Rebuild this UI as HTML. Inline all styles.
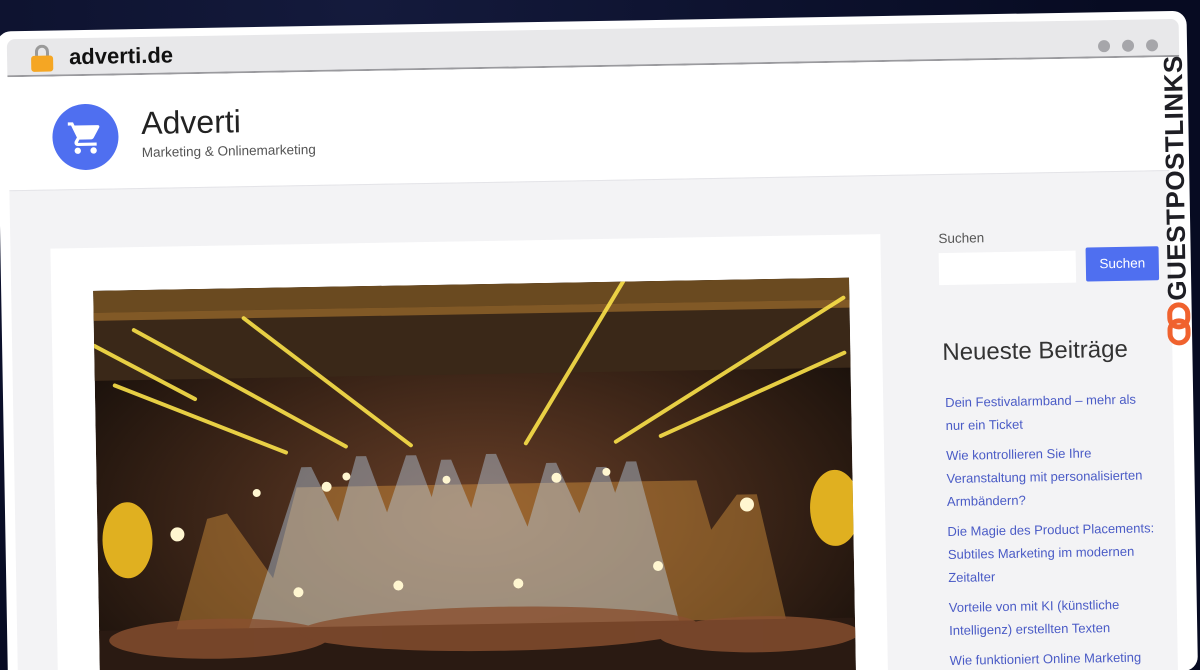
<!DOCTYPE html>
<html><head><meta charset="utf-8"><style>
*{margin:0;padding:0;box-sizing:border-box}
html,body{width:1200px;height:670px;overflow:hidden}
body{background:#0a0f2a;font-family:"Liberation Sans","DejaVu Sans",sans-serif;position:relative}
.clip{position:absolute;left:0;top:0;width:1200px;height:670px;overflow:hidden}
.stars{position:absolute;inset:0;background:radial-gradient(circle at 30% 0%,#141a3c,#070b22 70%)}
.rot{position:absolute;left:0;top:0;width:1200px;height:670px;transform:rotate(-1deg);transform-origin:600px 335px}
.win{position:absolute;left:2px;top:21px;width:1190px;height:660px;background:#fff;border-radius:14px;overflow:hidden}
.bar{position:absolute;left:10px;top:8px;width:1172px;height:38px;background:#e8e8ea;border-radius:8px 8px 0 0;border-bottom:2px solid #9a9a9e}
.hdr{position:absolute;left:10px;top:46px;width:1160px;height:113px;background:#fff}
.main{position:absolute;left:10px;top:159px;width:1160px;height:501px;background:#f3f3f5;border-top:1px solid #e4e4e8;overflow:hidden}
.dot{position:absolute;top:20px;width:12px;height:12px;border-radius:50%;background:#a6a6aa}
a{color:#4a5bc6;text-decoration:none}
</style></head><body>
<div class="clip">
<div class="stars"></div>
<div class="rot">
<div class="win">
 <div class="bar">
  <div style="position:absolute;left:28px;top:6px;width:14px;height:14px;border:3px solid #9a9a9a;border-bottom:none;border-radius:7px 7px 0 0"></div>
  <div style="position:absolute;left:24px;top:17px;width:22px;height:16px;background:#f5a623;border-radius:3px"></div>
  <div style="position:absolute;left:62px;top:6px;font-size:22px;font-weight:bold;color:#111">adverti.de</div>
  <div class="dot" style="left:1091px"></div><div class="dot" style="left:1115px"></div><div class="dot" style="left:1139px"></div>
 </div>
 <div class="hdr">
  <div style="position:absolute;left:44px;top:28px;width:66px;height:66px;border-radius:50%;background:#4f6ff0"></div>
  <svg style="position:absolute;left:58px;top:43px" width="38" height="38" viewBox="0 0 24 24"><path fill="#fff" d="M7 18c-1.1 0-2 .9-2 2s.9 2 2 2 2-.9 2-2-.9-2-2-2zM1 2v2h2l3.6 7.6-1.4 2.4c-.1.3-.2.6-.2 1 0 1.1.9 2 2 2h12v-2H7.4c-.1 0-.2-.1-.2-.2v-.1l.9-1.7h7.4c.8 0 1.4-.4 1.7-1l3.6-6.5c.1-.2.1-.3.1-.5 0-.6-.4-1-1-1H5.2l-.9-2H1zm16 16c-1.1 0-2 .9-2 2s.9 2 2 2 2-.9 2-2-.9-2-2-2z"/></svg>
  <div style="position:absolute;left:133px;top:30px;font-size:32px;color:#222">Adverti</div>
  <div style="position:absolute;left:133px;top:70px;font-size:13.5px;color:#555">Marketing &amp; Onlinemarketing</div>
 </div>
 <div class="main">
  <div style="position:absolute;left:40px;top:58px;width:830px;height:520px;background:#fff"></div>
  <svg style="position:absolute;left:82px;top:101px" width="756" height="420" viewBox="0 0 756 420">
   <defs>
    <radialGradient id="g1" cx="50%" cy="55%" r="60%"><stop offset="0" stop-color="#6a4028"/><stop offset="1" stop-color="#1c120c"/></radialGradient>
   </defs>
   <rect width="756" height="420" fill="url(#g1)"/>
   <rect width="756" height="90" fill="#3a2818"/>
   <rect y="0" width="756" height="22" fill="#6a4a20"/>
   <rect y="22" width="756" height="8" fill="#b07a30" opacity=".6"/>
   <g fill="#e8a040" opacity=".4">
    <polygon points="110,230 130,225 250,400 60,400"/><polygon points="640,215 660,215 700,400 500,400"/>
    <polygon points="200,200 600,200 650,380 150,380"/>
   </g>
   <g fill="#c0dcf6" opacity=".4">
    <polygon points="205,180 215,180 290,340 150,340"/><polygon points="260,170 270,170 330,340 210,340"/>
    <polygon points="310,170 320,170 380,340 250,340"/><polygon points="345,175 355,175 420,340 300,340"/>
    <polygon points="390,170 400,170 470,340 340,340"/><polygon points="450,180 460,180 530,340 400,340"/>
    <polygon points="500,185 510,185 560,340 440,340"/><polygon points="530,180 540,180 580,340 470,340"/>
   </g>
   <g stroke="#fbe24a" stroke-width="4" opacity=".9" stroke-linecap="round">
    <line x1="0" y1="55" x2="100" y2="110"/><line x1="20" y1="95" x2="190" y2="165"/>
    <line x1="40" y1="40" x2="250" y2="160"/><line x1="150" y1="30" x2="315" y2="160"/>
    <line x1="530" y1="0" x2="430" y2="160"/><line x1="750" y1="20" x2="520" y2="160"/>
    <line x1="750" y1="75" x2="565" y2="155"/>
   </g>
   <g fill="#fff6d0"><circle cx="80" cy="245" r="7"/><circle cx="650" cy="225" r="7"/><circle cx="230" cy="200" r="5"/><circle cx="460" cy="195" r="5"/><circle cx="560" cy="285" r="5"/><circle cx="200" cy="305" r="5"/><circle cx="300" cy="300" r="5"/><circle cx="420" cy="300" r="5"/><circle cx="160" cy="205" r="4"/><circle cx="250" cy="190" r="4"/><circle cx="350" cy="195" r="4"/><circle cx="510" cy="190" r="4"/></g>
   <ellipse cx="30" cy="250" rx="25" ry="38" fill="#e0b020"/><ellipse cx="738" cy="230" rx="25" ry="38" fill="#e0b020"/>
   <rect y="340" width="756" height="80" fill="#2a1a12"/>
   <g fill="#8a5030" opacity=".8"><ellipse cx="120" cy="350" rx="110" ry="20"/><ellipse cx="400" cy="345" rx="200" ry="22"/><ellipse cx="660" cy="355" rx="100" ry="18"/></g>
  </svg>
  <div style="position:absolute;left:928px;top:56px;font-size:13.5px;color:#555">Suchen</div>
  <div style="position:absolute;left:928px;top:78px;width:137px;height:32px;background:#fff"></div>
  <div style="position:absolute;left:1075px;top:75px;width:73px;height:34px;background:#4f6ff0;border-radius:2px;color:#fff;font-size:13.5px;text-align:center;line-height:34px">Suchen</div>
  <div style="position:absolute;left:930px;top:164px;font-size:24px;color:#333">Neueste Beiträge</div>
  <div style="position:absolute;left:932px;top:216px;width:226px;font-size:13px;line-height:23px">
   <div style="margin-bottom:7px;width:205px"><a>Dein Festivalarmband – mehr als nur ein Ticket</a></div>
   <div style="margin-bottom:7px"><a>Wie kontrollieren Sie Ihre Veranstaltung mit personalisierten Armbändern?</a></div>
   <div style="margin-bottom:7px"><a>Die Magie des Product Placements: Subtiles Marketing im modernen Zeitalter</a></div>
   <div style="margin-bottom:7px;width:200px"><a>Vorteile von mit KI (künstliche Intelligenz) erstellten Texten</a></div>
   <div><a>Wie funktioniert Online Marketing</a></div>
  </div>
 </div>
</div>
<div style="position:absolute;left:1178px;top:188px;transform:translate(-50%,-50%) rotate(-90deg);font-size:26px;font-weight:bold;color:#1e1e24;letter-spacing:.5px;white-space:nowrap">GUESTPOSTLINKS</div>
<svg style="position:absolute;left:1167px;top:312px" width="24" height="44" viewBox="0 0 24 44"><g fill="none" stroke="#f0622e" stroke-width="5"><rect x="3" y="3" width="18" height="22" rx="9"/><rect x="3" y="19" width="18" height="22" rx="9"/></g></svg>
</div>
</div>
</body></html>
